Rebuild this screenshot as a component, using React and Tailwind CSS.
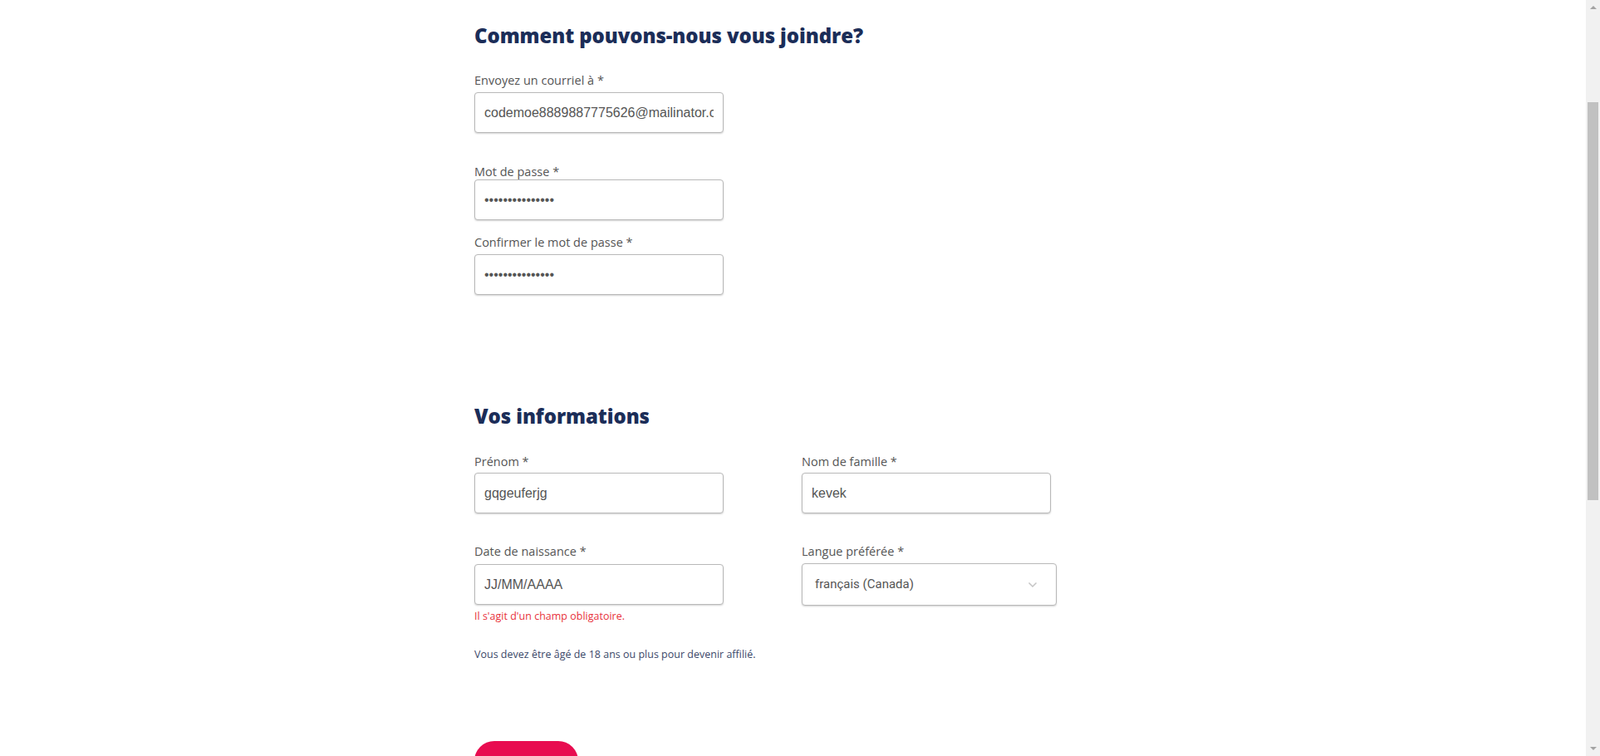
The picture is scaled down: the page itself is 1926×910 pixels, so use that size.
import React from 'react';

const labelCls = "block text-[14.5px] leading-[18px] text-[#555555] font-['Open_Sans',sans-serif]";
const inputCls =
  "block w-[300px] h-[49px] px-[11px] rounded-[4px] border border-[#b9b9b9] bg-white text-[16px] text-[#555555] font-['Liberation_Sans',Arial,sans-serif] shadow-[0_1px_2px_rgba(0,0,0,0.18)] outline-none";

const Field = ({ label, value, type = 'text', className = '', inputClass = 'mt-[4px]' }) => (
  <div className={className}>
    <label className={labelCls}>{label}</label>
    <input type={type} readOnly value={value} className={`${inputCls} ${inputClass}`} />
  </div>
);

// Browser-style vertical scrollbar on the right edge
const Scrollbar = () => (
  <div className="w-[17px] h-full flex flex-col bg-[#f1f1f1] shrink-0">
    <div className="h-[17px] flex items-center justify-center">
      <svg width="8" height="5" viewBox="0 0 8 5"><path d="M0 5 4 1l4 4z" fill="#a3a3a3" /></svg>
    </div>
    <div className="h-[106px]" />
    <div className="h-[479px] mx-[2px] bg-[#c1c1c1]" />
    <div className="flex-1" />
    <div className="h-[17px] flex items-center justify-center">
      <svg width="8" height="5" viewBox="0 0 8 5"><path d="M0 0l4 4 4-4z" fill="#a3a3a3" /></svg>
    </div>
  </div>
);

export default function App() {
  return (
    <div className="h-[910px] flex overflow-hidden bg-white">
      <main className="flex-1 min-w-0">
        <div className="mx-auto w-[767px] pt-[27px]">
          {/* Contact */}
          <h2 className="text-[24px] leading-8 font-extrabold text-[#1b2d58] font-['Open_Sans',sans-serif] tracking-[-0.1px]">
            Comment pouvons-nous vous joindre?
          </h2>

          <Field className="mt-[29px]" inputClass="mt-[5px]" label="Envoyez un courriel à *" value="codemoe8889887775626@mailinator.com" />
          <Field className="mt-[38px]" inputClass="mt-0" label="Mot de passe *" type="password" value="abcdefghijklmno" />
          <Field className="mt-[18px]" inputClass="mt-[5px]" label="Confirmer le mot de passe *" type="password" value="abcdefghijklmno" />

          {/* Personal info */}
          <h2 className="mt-[130px] text-[24px] leading-8 font-extrabold text-[#1b2d58] font-['Open_Sans',sans-serif] tracking-[-0.1px]">
            Vos informations
          </h2>

          <div className="mt-[30px] flex">
            <Field className="w-[394px]" label="Prénom *" value="gqgeuferjg" />
            <Field label="Nom de famille *" value="kevek" />
          </div>

          <div className="mt-[37px] flex">
            <div className="w-[394px]">
              <label className={labelCls}>Date de naissance *</label>
              <input
                type="text"
                readOnly
                placeholder="JJ/MM/AAAA"
                className={`${inputCls} mt-[6px] placeholder:text-[#555555]`}
              />
              <p className="mt-[6px] text-[12.5px] leading-4 text-[#e8323c] font-['Open_Sans',sans-serif]">
                Il s'agit d'un champ obligatoire.
              </p>
            </div>
            <div>
              <label className={labelCls}>Langue préférée *</label>
              <div className="mt-[5px] w-[307px] h-[51px] flex items-center justify-between pl-[15px] pr-[22px] rounded-[4px] border border-[#b9b9b9] bg-white shadow-[0_1px_2px_rgba(0,0,0,0.18)]">
                <span className="text-[15px] text-[#555555] font-['Roboto',sans-serif]">français (Canada)</span>
                <svg width="12" height="8" viewBox="0 0 12 8" fill="none">
                  <path d="M1.5 1.5 6 6l4.5-4.5" stroke="#c4c4c4" strokeWidth="1.5" />
                </svg>
              </div>
            </div>
          </div>

          <p className="mt-[30px] text-[12.5px] leading-4 text-[#3b4869] font-['Open_Sans',sans-serif]">
            Vous devez être âgé de 18 ans ou plus pour devenir affilié.
          </p>

          <button className="mt-[96px] w-[125px] h-[48px] rounded-full bg-[#e80c50] text-white text-[16px] font-bold font-['Open_Sans',sans-serif]">
            Suivant
          </button>
        </div>
      </main>
      <Scrollbar />
    </div>
  );
}
